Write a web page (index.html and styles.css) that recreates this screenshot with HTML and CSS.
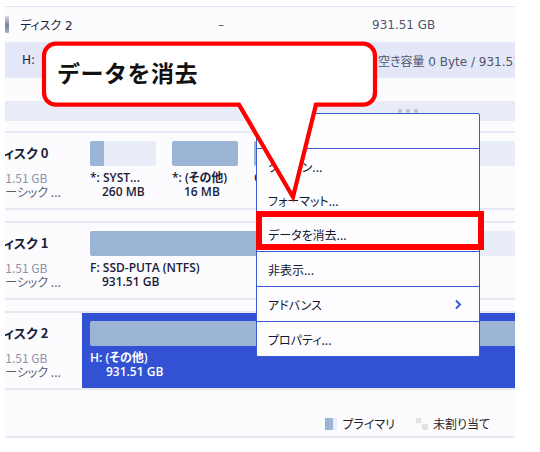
FILE: index.html
```html
<!DOCTYPE html>
<html lang="ja">
<head>
<meta charset="utf-8">
<link rel="stylesheet" href="styles.css">
</head>
<body>
<div class="app">
  <div class="wide">
    <div class="trow head">
      <span class="disk-icon"></span>
      <span>ディスク 2</span>
      <span class="dash">–</span>
      <span class="gray">931.51 GB</span>
    </div>
    <div class="trow part">
      <span>H:</span>
      <span class="gray">空き容量 0 Byte / 931.51 GB</span>
    </div>
  </div>
  <div class="spacer"></div>
  <div class="band"><span class="dot"></span><span class="dot"></span><span class="dot"></span></div>
  <div class="disks">
    <div class="disk">
      <div class="dinfo">
        <div class="dname"><span class="cut13">ディスク 0</span></div>
        <div class="dsize"><span class="cut13">931.51 GB</span></div>
        <div class="dtype"><span class="cut12">ベーシック ...</span></div>
      </div>
      <div class="pcell">
        <div class="bar"><div class="fill" style="width:21%"></div></div>
        <div class="plabel">*: SYST...</div>
        <div class="psize">260 MB</div>
      </div>
      <div class="pcell">
        <div class="bar"><div class="fill" style="width:100%"></div></div>
        <div class="plabel">*: (その他)</div>
        <div class="psize">16 MB</div>
      </div>
      <div class="pcell grow">
        <div class="bar"><div class="fill" style="width:40%"></div></div>
        <div class="plabel">C: (NTFS)</div>
        <div class="psize">931.23 GB</div>
      </div>
    </div>
    <div class="disk">
      <div class="dinfo">
        <div class="dname"><span class="cut13">ディスク 1</span></div>
        <div class="dsize"><span class="cut13">931.51 GB</span></div>
        <div class="dtype"><span class="cut12">ベーシック ...</span></div>
      </div>
      <div class="pcell grow">
        <div class="bar"><div class="fill" style="width:70%"></div></div>
        <div class="plabel">F: SSD-PUTA (NTFS)</div>
        <div class="psize">931.51 GB</div>
      </div>
    </div>
    <div class="disk">
      <div class="dinfo">
        <div class="dname"><span class="cut13">ディスク 2</span></div>
        <div class="dsize"><span class="cut13">931.51 GB</span></div>
        <div class="dtype"><span class="cut12">ベーシック ...</span></div>
      </div>
      <div class="pcell grow sel">
        <div class="bar"><div class="fill" style="width:100%"></div></div>
        <div class="plabel">H: (その他)</div>
        <div class="psize wide-indent">931.51 GB</div>
      </div>
    </div>
  </div>
  <div class="legend">
    <span class="sw sw-primary"></span><span class="ltext">プライマリ</span>
    <span class="sw sw-free"></span><span class="ltext">未割り当て</span>
  </div>
</div>

<div class="menu">
  <div class="mi sep"></div>
  <div class="mi">クローン...</div>
  <div class="mi">フォーマット...</div>
  <div class="mi sep">データを消去...</div>
  <div class="mi sep">非表示...</div>
  <div class="mi sep adv"><span>アドバンス</span>
    <svg class="chev" width="8" height="11" viewBox="0 0 8 11"><path d="M2 1.5 L6 5.5 L2 9.5" fill="none" stroke="#3a5ad6" stroke-width="2"/></svg>
  </div>
  <div class="mi">プロパティ...</div>
</div>

<div class="hl"></div>

<div class="callout">
  <svg width="540" height="452" viewBox="0 0 540 452">
    <path d="M56 43.7 H363 A12 12 0 0 1 375 55.7 V92.7 A12 12 0 0 1 363 104.7 H316 L293 197 L239 104.7 H56 A12 12 0 0 1 44 92.7 V55.7 A12 12 0 0 1 56 43.7 Z" fill="#ffffff" stroke="#ff0000" stroke-width="4.2" stroke-linejoin="miter"/>
  </svg>
  <div class="callout-text">データを消去</div>
</div>
</body>
</html>
```

FILE: styles.css
```css
* {
  box-sizing: border-box;
  margin: 0;
  padding: 0;
}

body {
  margin: 0;
  width: 540px;
  height: 452px;
  overflow: hidden;
  position: relative;
  background: #ffffff;
  font-family: "Noto Sans CJK JP", "Noto Sans", sans-serif;
  font-feature-settings: "palt";
  color: #1c2038;
}

.app {
  margin: 6px 0 0 5px;
  width: 510px;
  overflow: hidden;
  background: #fcfcfe;
  border-top: 1px solid #dfe3f2;
}

.wide {
  width: 560px;
}

.trow {
  display: grid;
  align-items: center;
  font-family: "DejaVu Sans", "Noto Sans CJK JP", sans-serif;
  font-size: 12px;
  white-space: nowrap;
  color: #1c2038;
}

.head {
  height: 35px;
  grid-template-columns: 15px 198px 154px 1fr;
}

.disk-icon {
  width: 4px;
  height: 17px;
  border-radius: 1px;
  background: linear-gradient(#d6d9e8, #7a82a0 55%, #aab0c6);
}

.dash {
  color: #555a6e;
}

.gray {
  color: #50566c;
}

.part {
  height: 36px;
  padding-left: 17px;
  grid-template-columns: 356px 1fr;
  background: #e3e7f7;
}

.spacer {
  height: 23px;
}

.band {
  height: 20px;
  background: #e9ecf6;
  display: flex;
  align-items: center;
  gap: 4px;
  padding-left: 393px;
}

.dot {
  width: 4px;
  height: 4px;
  border-radius: 50%;
  background: #b9bdc9;
}

.disks {
  width: 560px;
  padding-top: 10px;
}

.disk {
  display: flex;
  height: 79px;
  border-top: 2px solid #e6e9f4;
  border-bottom: 2px solid #e6e9f4;
  margin-bottom: 11px;
}

.disk:last-child {
  margin-bottom: 0;
}

.dinfo {
  width: 77px;
  flex: none;
  overflow: hidden;
  padding-top: 12px;
  white-space: nowrap;
}

.cut13 {
  display: inline-block;
  margin-left: -13px;
}

.cut12 {
  display: inline-block;
  margin-left: -12px;
}

.dname {
  font-size: 13px;
  font-weight: 700;
  line-height: 16px;
  margin-bottom: 10px;
  color: #1b2039;
}

.dsize {
  font-size: 12px;
  line-height: 14px;
  color: #8d93a6;
}

.dtype {
  font-size: 12px;
  line-height: 14px;
  color: #5a5f72;
}

.pcell {
  width: 82px;
  flex: none;
  padding: 8px 8px 0;
  white-space: nowrap;
  overflow: hidden;
}

.pcell.grow {
  flex: 1;
  width: auto;
}

.pcell.sel {
  background: #3352d3;
  color: #ffffff;
}

.bar {
  height: 25px;
  border-radius: 2px;
  background: #e9edf7;
  overflow: hidden;
}

.fill {
  height: 100%;
  background: #9cb4d6;
}

.plabel {
  margin-top: 5px;
  font-family: "Open Sans", "Noto Sans CJK JP", sans-serif;
  font-size: 12px;
  font-weight: 600;
  line-height: 14px;
  color: #1b2039;
}

.psize {
  padding-left: 12px;
  font-family: "Open Sans", "Noto Sans CJK JP", sans-serif;
  font-size: 12px;
  font-weight: 600;
  line-height: 14px;
  color: #1b2039;
}

.sel .plabel,
.sel .psize {
  color: #ffffff;
}

.psize.wide-indent {
  padding-left: 16px;
}

.legend {
  height: 48px;
  display: flex;
  justify-content: flex-end;
  align-items: flex-start;
  padding: 27px 25px 0 0;
  border-bottom: 2px solid #e6e8f4;
  font-size: 12px;
  line-height: 14px;
  color: #222530;
}

.sw {
  width: 12px;
  height: 12px;
  margin-top: 1px;
  margin-right: 5px;
}

.sw-primary {
  background: linear-gradient(90deg, #9cb4d6 0 8px, #e9edf7 8px);
}

.sw-free {
  background:
    linear-gradient(#e2e2e4, #e2e2e4) 0 0 / 5px 5px no-repeat,
    linear-gradient(#e2e2e4, #e2e2e4) 6px 6px / 6px 6px no-repeat,
    #fafafa;
}

.ltext + .sw {
  margin-left: 21px;
}

.menu {
  position: absolute;
  left: 256px;
  top: 113px;
  width: 224px;
  height: 244px;
  border: 1px solid #3b5bd4;
  border-radius: 0 2px 2px 2px;
  background: #fdfdff;
}

.mi {
  height: 34px;
  display: flex;
  align-items: center;
  padding: 0 17px 0 11px;
  font-size: 12px;
  color: #14172e;
  white-space: nowrap;
}

.mi.sep {
  height: 35px;
  border-bottom: 1px solid #3b5bd4;
}

.mi.adv {
  justify-content: space-between;
}

.chev {
  display: block;
}

.hl {
  position: absolute;
  left: 256px;
  top: 211px;
  width: 228px;
  height: 39px;
  border: 6px solid #ff0000;
}

.callout {
  position: absolute;
  left: 0;
  top: 0;
  width: 540px;
  height: 452px;
  pointer-events: none;
}

.callout svg {
  display: block;
}

.callout-text {
  position: absolute;
  left: 57px;
  top: 56px;
  font-family: "Noto Sans CJK JP", sans-serif;
  font-feature-settings: normal;
  font-size: 23px;
  font-weight: 700;
  line-height: 32px;
  letter-spacing: 0.5px;
  color: #111111;
}
```
